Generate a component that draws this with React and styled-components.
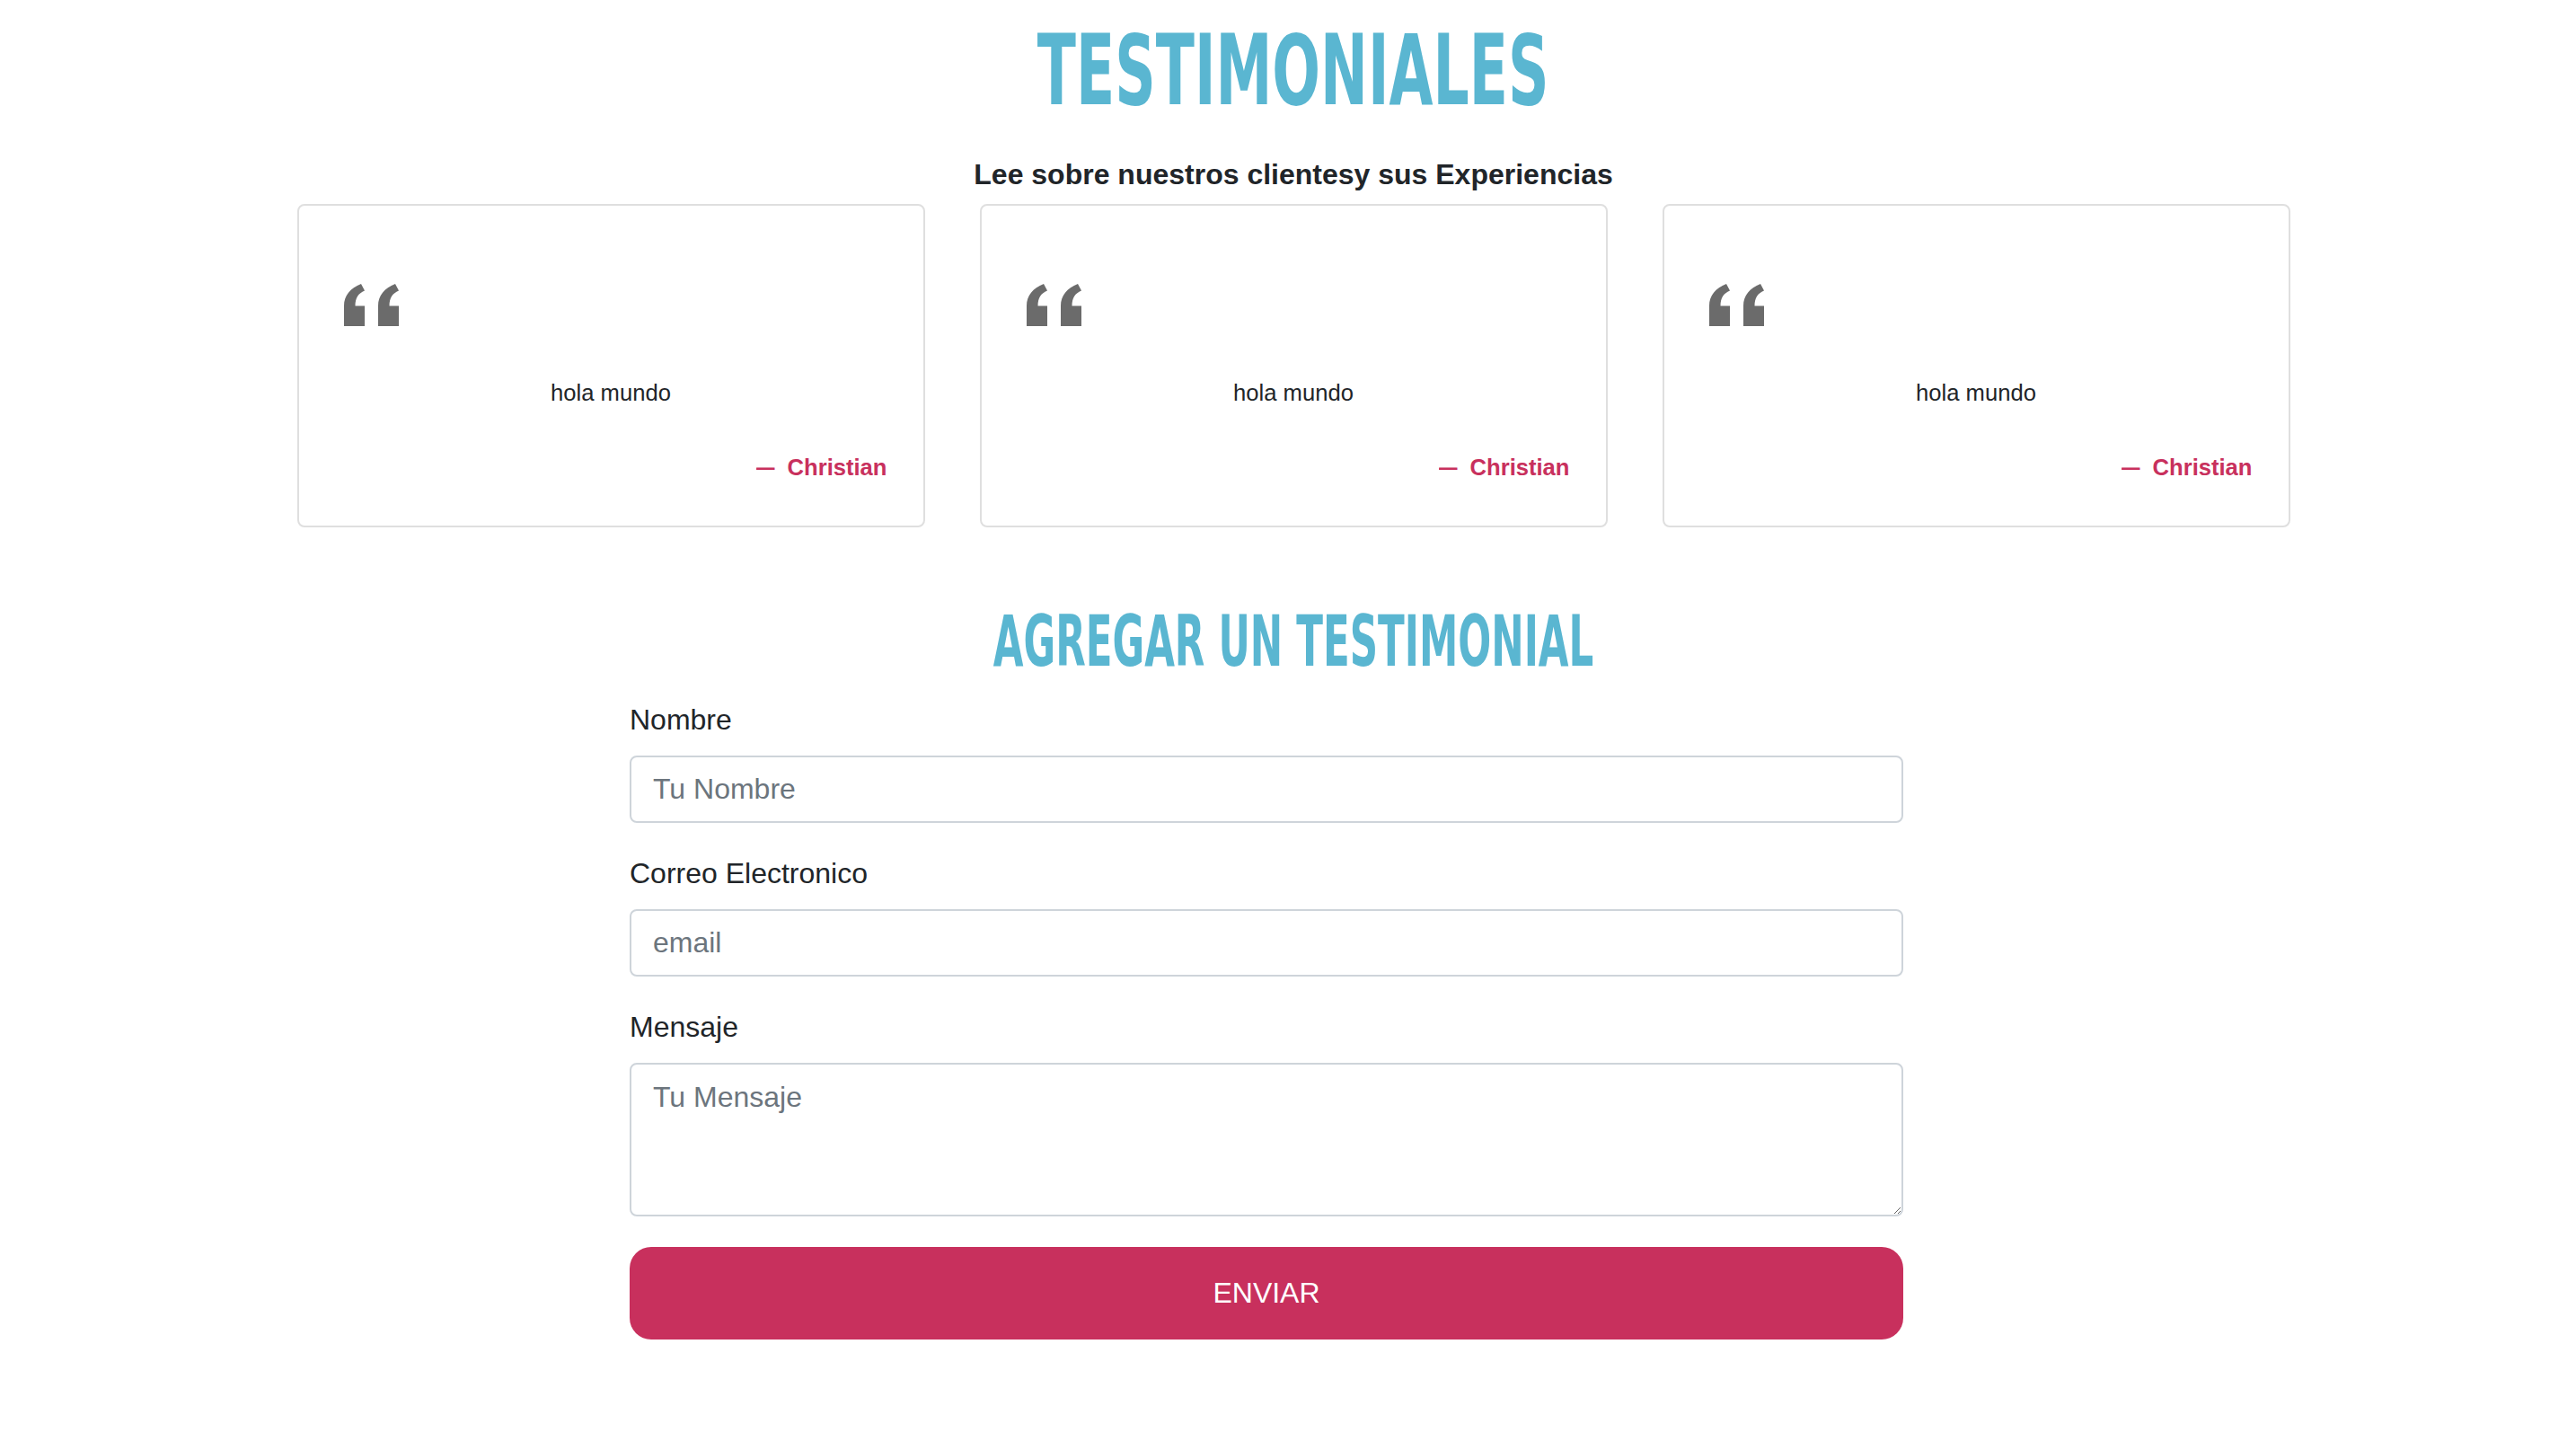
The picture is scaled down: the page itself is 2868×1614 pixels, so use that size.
import React from 'react'
import styled, { createGlobalStyle } from 'styled-components'

const GlobalStyle = createGlobalStyle`
  html, body {
    margin: 0;
    padding: 0;
    background: #fff;
  }
  body {
    font-family: "Liberation Sans", Arial, sans-serif;
    color: #212529;
  }
  * { box-sizing: border-box; }
`

const testimonials = [
  { text: 'hola mundo', author: 'Christian' },
  { text: 'hola mundo', author: 'Christian' },
  { text: 'hola mundo', author: 'Christian' },
]

function QuoteMark() {
  return (
    <QuoteSvg viewBox="0 0 62 50" width="62" height="47" preserveAspectRatio="none">
      <path d="M0 50 V26 C0 14 7 5 19 0 L23 8 C16 11 12.5 17 12.5 26 H23 V50 Z" />
      <path d="M38 50 V26 C38 14 45 5 57 0 L61 8 C54 11 50.5 17 50.5 26 H61 V50 Z" />
    </QuoteSvg>
  )
}

function App() {
  return (
    <Page>
      <GlobalStyle />
      <Heading size={109} squeeze={0.645}>
        <span>TESTIMONIALES</span>
      </Heading>
      <Subtitle>Lee sobre nuestros clientesy sus Experiencias</Subtitle>

      <CardsRow>
        <CardsGrid>
          {testimonials.map((t, i) => (
            <Card key={i}>
              <QuoteMark />
              <CardText>{t.text}</CardText>
              <CardFooter>
                <Dash>—</Dash>
                <Author>{t.author}</Author>
              </CardFooter>
            </Card>
          ))}
        </CardsGrid>
      </CardsRow>

      <Heading size={78} squeeze={0.62} top={88}>
        <span>AGREGAR UN TESTIMONIAL</span>
      </Heading>

      <FormRow>
        <Form onSubmit={(e) => e.preventDefault()}>
          <Group>
            <Label htmlFor="nombre">Nombre</Label>
            <Input id="nombre" type="text" placeholder="Tu Nombre" />
          </Group>
          <Group>
            <Label htmlFor="correo">Correo Electronico</Label>
            <Input id="correo" type="email" placeholder="email" />
          </Group>
          <Group>
            <Label htmlFor="mensaje">Mensaje</Label>
            <Textarea id="mensaje" placeholder="Tu Mensaje" />
          </Group>
          <Button type="submit">ENVIAR</Button>
        </Form>
      </FormRow>
    </Page>
  )
}

export default App

const Page = styled.div`
  min-height: 1614px;
  padding: 24px 0 0 12px;
  display: flex;
  flex-direction: column;
  align-items: stretch;
`

const Heading = styled.h1`
  margin: ${({ top }) => top || 0}px 0 0;
  text-align: center;
  color: #5ab6d1;
  font-family: "Liberation Sans Narrow", "DejaVu Sans Condensed", "Liberation Sans", sans-serif;
  font-weight: 700;
  font-size: ${({ size }) => size}px;
  line-height: 1;
  span {
    display: inline-block;
    transform: scaleX(${({ squeeze }) => squeeze});
    transform-origin: center;
    white-space: nowrap;
  }
`

const Subtitle = styled.h2`
  margin: 37px 0 0;
  text-align: center;
  font-size: 32px;
  line-height: 48px;
  font-weight: 700;
  color: #212529;
`

const CardsRow = styled.div`
  display: flex;
  justify-content: center;
  margin-top: 9px;
`

const CardsGrid = styled.div`
  width: 2219px;
  display: grid;
  grid-template-columns: repeat(3, 1fr);
  column-gap: 61px;
`

const Card = styled.div`
  height: 360px;
  border: 2px solid #dfdfdf;
  border-radius: 8px;
  padding: 40px;
  display: flex;
  flex-direction: column;
`

const QuoteSvg = styled.svg`
  display: block;
  margin: 47px 0 0 10px;
  fill: #6b6b6b;
`

const CardText = styled.p`
  margin: 55px 0 0;
  text-align: center;
  font-size: 25.6px;
  line-height: 38.4px;
  color: #212529;
`

const CardFooter = styled.div`
  margin-top: 45px;
  display: flex;
  justify-content: flex-end;
  align-items: baseline;
  font-size: 25.6px;
  line-height: 38.4px;
  color: #c8305d;
  font-weight: 700;
`

const Dash = styled.span`
  display: inline-block;
  transform: scaleX(0.8);
  transform-origin: right center;
  margin-right: 14px;
`

const Author = styled.cite`
  font-style: normal;
`

const FormRow = styled.div`
  display: flex;
  justify-content: center;
  padding-right: 60px;
  margin-top: 24px;
`

const Form = styled.form`
  width: 1418px;
  display: flex;
  flex-direction: column;
`

const Group = styled.div`
  display: flex;
  flex-direction: column;
  margin-bottom: 32px;
`

const Label = styled.label`
  font-size: 32px;
  line-height: 48px;
  margin-bottom: 16px;
  color: #212529;
`

const fieldBase = `
  width: 100%;
  border: 2px solid #ced4da;
  border-radius: 8px;
  background: #fff;
  font-family: "Liberation Sans", Arial, sans-serif;
  font-size: 32px;
  line-height: 48px;
  color: #495057;
  padding: 12px 24px;
  outline: none;
  &::placeholder {
    color: #6c757d;
    opacity: 1;
  }
`

const Input = styled.input`
  ${fieldBase}
  height: 75px;
`

const Textarea = styled.textarea`
  ${fieldBase}
  height: 171px;
  resize: vertical;
  display: block;
`

const Button = styled.button`
  margin-top: 2px;
  height: 103px;
  width: 100%;
  border: none;
  border-radius: 24px;
  background: #c8305d;
  color: #fff;
  font-family: "Liberation Sans", Arial, sans-serif;
  font-size: 32px;
  cursor: pointer;
`
